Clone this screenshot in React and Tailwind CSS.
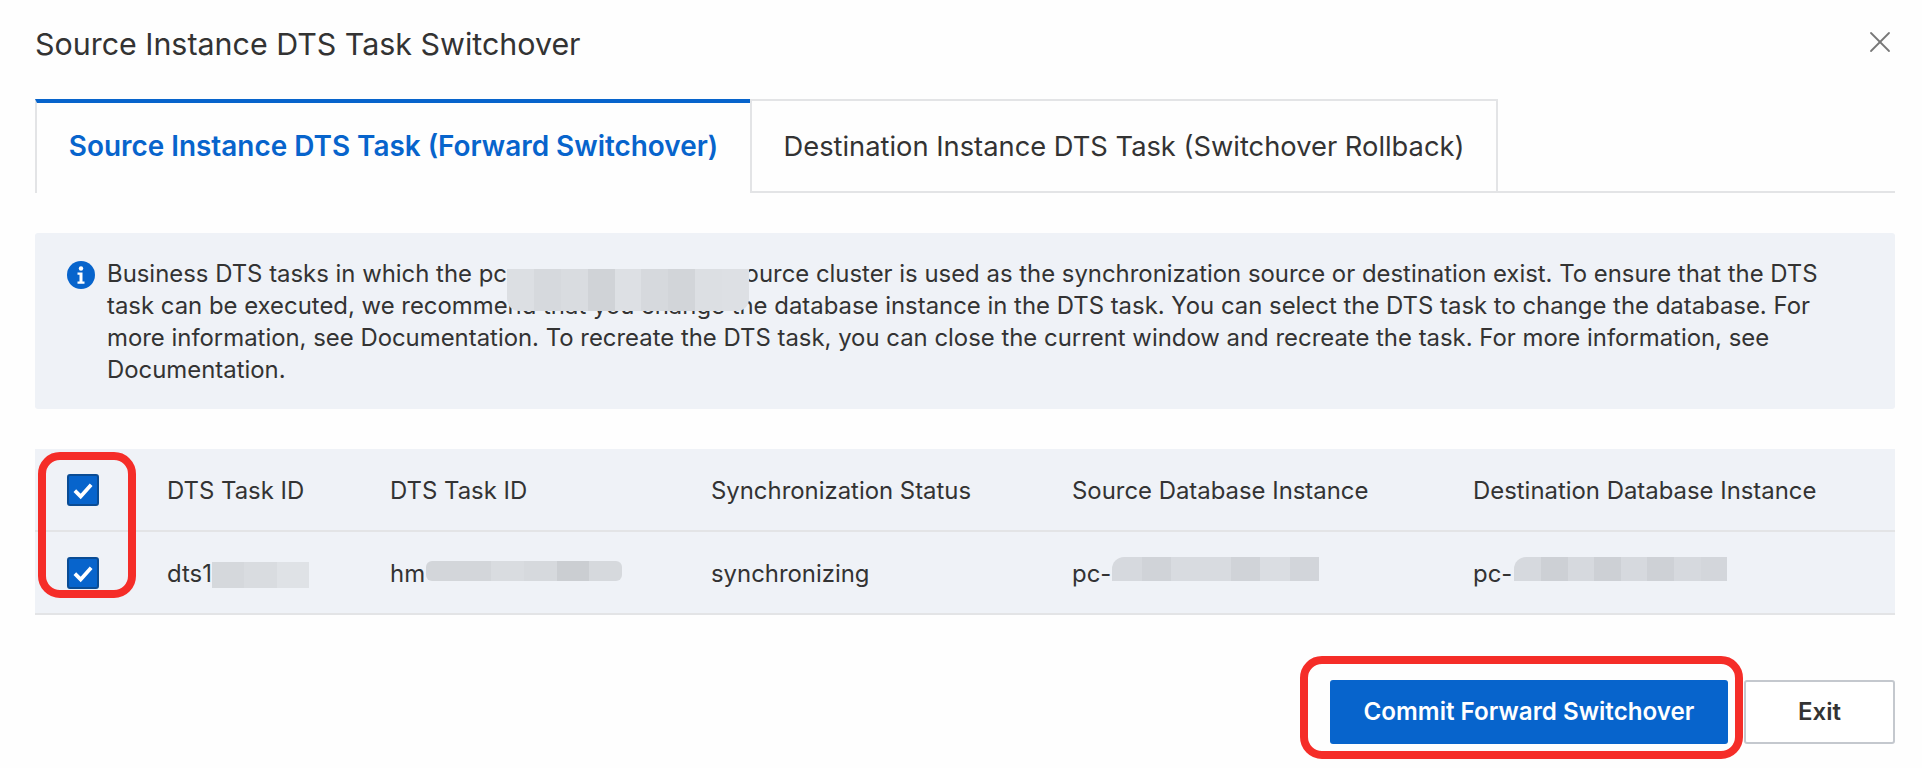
import { X } from "lucide-react";

const columns = ["w-[132px] pl-8", "w-[223px]", "w-[321px]", "w-[361px]", "w-[401px]", "flex-1"];

// pixelated redaction strip, one span per mosaic block
function Mosaic({ shades, className }) {
  return (
    <span className={`inline-flex overflow-hidden align-middle ${className}`}>
      {shades.map((shade, i) => (
        <span key={i} className={`h-full flex-1 ${shade}`}></span>
      ))}
    </span>
  );
}

function Checkbox() {
  return (
    <span className="flex h-8 w-8 items-center justify-center rounded-[3px] border-2 border-[#0a4c94] bg-[#0764cc]">
      <svg viewBox="0 0 24 24" className="h-7 w-7" fill="none" stroke="#ffffff" strokeWidth="3.2">
        <path d="M5 12.5l5 5 9-10" />
      </svg>
    </span>
  );
}

function Row({ cells }) {
  return (
    <div className="flex h-[83px] items-center border-b-2 border-[#e3e4e6] text-[23.9px] text-[#333333]">
      <div className={columns[0]}>
        <Checkbox />
      </div>
      {cells.map((cell, i) => (
        <div key={i} className={`whitespace-nowrap pt-[2px] ${columns[i + 1]}`}>
          {cell}
        </div>
      ))}
    </div>
  );
}

export default function App() {
  return (
    <div className="relative h-[768px] w-[1922px] overflow-hidden bg-[#fefefe] pl-[35px] pr-[27px] font-['Inter',sans-serif]">
      <div className="flex h-[99px] items-start justify-between pt-[24px]">
        <h1 className="text-[30.4px] leading-10 text-[#333333]">Source Instance DTS Task Switchover</h1>
        <X className="mr-[-3px] h-9 w-9 text-[#777777]" strokeWidth={1.2} />
      </div>

      <div className="flex h-[94px] border-b-2 border-[#e3e4e6]">
        <div className="mb-[-2px] flex w-[715px] items-center justify-center border-l-2 border-t-4 border-l-[#e3e4e6] border-t-[#0764cc] bg-[#fefefe] pb-[2px] text-[27.9px] font-semibold text-[#0764cc]">
          Source Instance DTS Task (Forward Switchover)
        </div>
        <div className="flex w-[748px] items-center justify-center border-x-2 border-t-2 border-[#e3e4e6] pt-[2px] text-[27.3px] text-[#333333]">
          Destination Instance DTS Task (Switchover Rollback)
        </div>
      </div>

      <div className="mt-10 flex h-[176px] gap-3 rounded-[3px] bg-[#eff2f7] pl-[32px] pt-[25px] text-[23.9px] leading-8 text-[#333333]">
        <svg viewBox="0 0 28 28" className="mt-[3px] h-[28px] w-[28px] shrink-0">
          <circle cx="14" cy="14" r="14" fill="#0764cc" />
          <circle cx="14" cy="7.5" r="2.2" fill="#ffffff" />
          <path d="M10.5 11.5h5v9h2v2.2h-7v-2.2h2v-6.8h-2z" fill="#ffffff" />
        </svg>
        <p className="whitespace-nowrap">
          Business DTS tasks in which the pc-
          <span className="relative inline-block w-[214px]">
            <Mosaic
              className="absolute left-[-11px] top-[-13px] h-[42px] w-[242px] rounded-b-xl"
              shades={["bg-[#dcdfe3]", "bg-[#d6d9dd]", "bg-[#d9dce0]", "bg-[#d0d3d7]", "bg-[#dde0e4]", "bg-[#d6d9dd]", "bg-[#d2d5d9]", "bg-[#dcdfe3]", "bg-[#dde0e4]"]}
            />
          </span>
          source cluster is used as the synchronization source or destination exist. To ensure that the DTS
          <br />
          task can be executed, we recommend that you change the database instance in the DTS task. You can select the DTS task to change the database. For
          <br />
          more information, see Documentation. To recreate the DTS task, you can close the current window and recreate the task. For more information, see
          <br />
          Documentation.
        </p>
      </div>

      <div className="mt-10 bg-[#eff2f7]">
        <Row cells={["DTS Task ID", "DTS Task ID", "Synchronization Status", "Source Database Instance", "Destination Database Instance"]} />
        <Row
          cells={[
            <>
              dts1
              <Mosaic className="h-[26px] w-[97px]" shades={["bg-[#d5d8dc]", "bg-[#d9dce0]", "bg-[#dfe2e6]"]} />
            </>,
            <>
              hm
              <Mosaic
                className="ml-[1px] h-[20px] w-[196px] -translate-y-1 rounded-md"
                shades={["bg-[#d3d6da]", "bg-[#d3d6da]", "bg-[#d9dce0]", "bg-[#d6d9dd]", "bg-[#cbced2]", "bg-[#d6d9dd]"]}
              />
            </>,
            "synchronizing",
            <>
              pc-
              <Mosaic
                className="ml-[1px] h-[24px] w-[207px] -translate-y-1.5 rounded-tl-xl"
                shades={["bg-[#d6d9de]", "bg-[#d0d3d8]", "bg-[#d8dbe0]", "bg-[#d8dbe0]", "bg-[#d0d3d8]", "bg-[#dadde2]", "bg-[#d2d5da]"]}
              />
            </>,
            <>
              pc-
              <Mosaic
                className="ml-[2px] h-[24px] w-[213px] -translate-y-1.5 rounded-tl-xl"
                shades={["bg-[#d6d9de]", "bg-[#cdd0d5]", "bg-[#d6d9de]", "bg-[#cdd0d5]", "bg-[#d6d9de]", "bg-[#ced1d6]", "bg-[#d6d9de]", "bg-[#d3d6db]"]}
              />
            </>,
          ]}
        />
      </div>

      <div className="mt-[65px] flex justify-end gap-4">
        <button className="h-16 w-[398px] rounded-[3px] bg-[#0764cc] text-[24.2px] font-semibold text-white">
          Commit Forward Switchover
        </button>
        <button className="h-16 w-[151px] rounded-[3px] border-2 border-[#c4c8ce] bg-white text-[24px] font-semibold text-[#333333]">
          Exit
        </button>
      </div>

      {/* red annotation frames drawn over the screenshot */}
      <div className="absolute left-[38px] top-[452px] h-[146px] w-[98px] rounded-[22px] border-[8px] border-[#f52d28]"></div>
      <div className="absolute left-[1300px] top-[656px] h-[103px] w-[443px] rounded-[22px] border-[8px] border-[#f52d28]"></div>
    </div>
  );
}
